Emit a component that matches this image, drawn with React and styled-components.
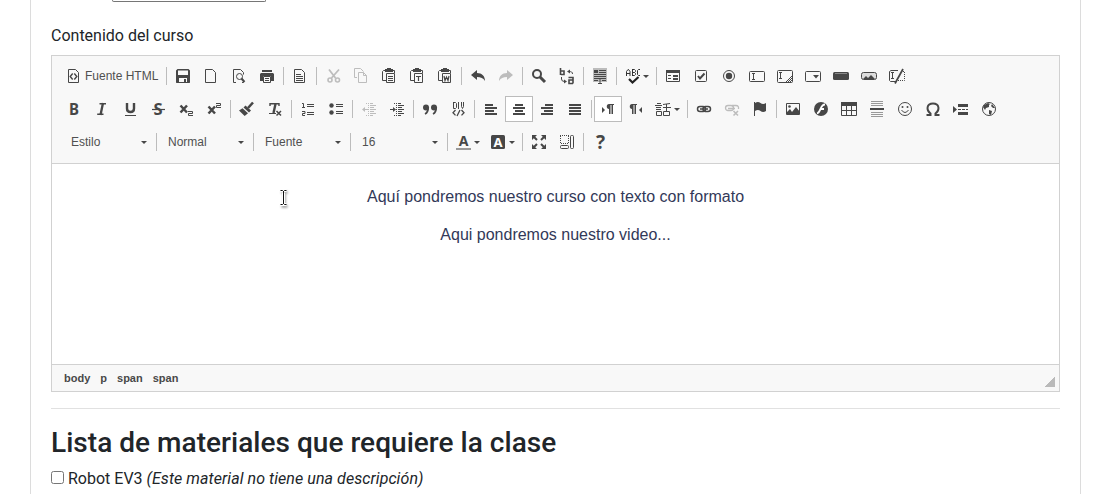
import React from 'react';
import styled, { createGlobalStyle, css } from 'styled-components';

const Global = createGlobalStyle`
  * { box-sizing: border-box; }
  body { margin: 0; background: #fff; color: #212529; font: 16px/24px Roboto, sans-serif; overflow: hidden; }
`;
const INK = '#474747';
const ui = css`font-family: "Liberation Sans", Arial, sans-serif;`;

const Page = styled.div`height: 494px; padding: 0 28px 0 30px; overflow: hidden;`;
const Card = styled.main`height: 494px; padding: 0 20px; border: solid #dcdcdc; border-width: 0 1px;`;
const FieldEnd = styled.div`
  width: 154px; height: 2px; margin-left: 61px;
  border: 1px solid #767676; border-top: 0; border-radius: 0 0 3px 3px;
`;
const Label = styled.label`display: block; margin-top: 22px; height: 31px;`;
const Editor = styled.section`${ui} border: 1px solid #d1d1d1; height: 337px; display: flex; flex-direction: column;`;
const Toolbox = styled.div`
  display: flex; flex-direction: column; gap: 5px; height: 108px; padding: 6px 8px 0;
  background: #f8f8f8; border-bottom: 1px solid #d1d1d1;
`;
const Row = styled.div`display: flex; align-items: center; height: 28px;`;
const Separator = styled.span`width: 1px; height: 18px; margin: 0 2px; background: #bcbcbc;`;
const Button = styled.button`
  ${ui} display: flex; align-items: center; flex: none; height: 26px; padding: 0;
  width: ${p => (p.$wide ? '104px' : p.$menu ? '35px' : '28px')};
  border: 1px solid ${p => (p.$on ? '#bcbcbc' : 'transparent')};
  background: ${p => (p.$on ? '#fff' : 'transparent')};
  padding-left: 5px; color: ${INK}; font-size: 12px; white-space: nowrap;
  & > svg { flex: none; color: ${p => (p.$off ? '#bdbdbd' : INK)}; }
`;
const ButtonText = styled.span`margin-left: 3px; color: #505050;`;
const Arrow = styled.i`
  flex: none; width: 0; height: 0; margin-left: ${p => p.$gap || 0}px;
  border: solid transparent; border-width: 3px 3px 0; border-top-color: ${INK};
`;
const Combo = styled.div`
  display: flex; align-items: center; justify-content: space-between;
  width: ${p => (p.$first ? 94 : 92)}px; height: 26px; color: #505050;
  padding: 0 7px 0 ${p => (p.$first ? 11 : 9)}px; font-size: 12px;
`;
const Content = styled.div`
  flex: 1; position: relative; padding-top: 20px; text-align: center; color: #323958; font-size: 16px;
  p { margin: 0 0 12px; line-height: 26px; }
`;
const Pointer = styled.svg`position: absolute; left: 227px; top: 24px; filter: drop-shadow(1px 2px 1px #0005);`;
const Status = styled.footer`
  display: flex; justify-content: space-between; height: 27px; padding: 0 4px 4px 12px;
  background: #f8f8f8; border-top: 1px solid #d1d1d1;
`;
const PathList = styled.div`display: flex; gap: 10px; font-size: 11px; font-weight: 700; line-height: 26px; color: #484848;`;
const Grip = styled.span`
  align-self: flex-end; width: 10px; height: 10px;
  background: linear-gradient(135deg, transparent 48%, #bababa 50%);
`;
const Divider = styled.hr`margin: 16px 0 0; height: 1px; border: 0; background: #e1e1e1;`;
const Title = styled.h3`margin: 17px 0 7px; font-size: 28px; font-weight: 500; line-height: 34px; letter-spacing: .035px;`;
const Material = styled.label`
  display: flex; align-items: flex-start; line-height: 24px;
  em { letter-spacing: .07px; }
`;
const Check = styled.input`width: 13px; height: 13px; margin: 4px 4px 0 0;`;

const page = 'M2.5 1.5h7l3 3v10h-10z';
const clip = (
  <>
    <path d="M4 2.500H2.500l-1 1V12.500H5M11.500 2.500H13.500V5" />
    <path className="f" d="M4 1h2V0h4v1h2v3H4z" />
    <path d="M5.500 5.500h8v9h-8z" />
  </>
);
const T = ({ x, y, s, children, ...rest }) => (
  <text className="f" x={x} y={y} fontSize={s} fontFamily="DejaVu Sans, sans-serif" fontWeight="700" {...rest}>{children}</text>
);

const icons = {
  source: <><path d={page} /><path strokeWidth="1.400" d="M6.700 5.500L4.200 8.500l2.500 3M8.300 5.500l2.500 3-2.500 3" /></>,
  save: <path className="f" fillRule="evenodd" d="M2.500 1h11L15 2.500v12l-.5.5h-13l-.5-.5v-12zM3 2.500V7h10V2.500zM4 10v4h5v-3h2v3h1v-4z" />,
  blank: <path d={page} />,
  preview: <><path d="M5 14.500H2.500v-13h7l3 3v2M12.500 13v1.500H11" /><circle cx="8.500" cy="8.500" r="3" /><path strokeWidth="2" d="M10.500 10.500l3 3.500" /></>,
  print: <><path className="f" fillRule="evenodd" d="M3 2h10v2H3zM2 5h12l1 1v7h-3V8H4v5H1V6z" /><path d="M4.500 8.500h7v6h-7zM6 10.500h4M6 12.500h4" /></>,
  templates: <><path d={page} /><path d="M4 6.500h5M4 8.500h7M4 10.500h7M4 12.500h7" /></>,
  cut: <><path strokeWidth="1.800" d="M4 1.500L10.500 10M14 1.500L6.500 10" /><circle cx="5" cy="12" r="2" strokeWidth="1.600" /><circle cx="12.500" cy="12" r="2" strokeWidth="1.600" /></>,
  copy: <><path d="M4 9.500H1.500v-9h6l3 3" /><path d="M5.500 4.500h5l3 3v7h-8zM10.500 4.500v3h3" /></>,
  paste: <>{clip}<path d="M7 8.500h5M7 10.500h5M7 12.500h5" /></>,
  pasteText: <>{clip}<path strokeWidth="1.200" d="M7 8.500h5M9.500 8v5" /></>,
  pasteWord: <>{clip}<path strokeWidth="1.200" d="M7 8l1 4.500L9.500 9l1.500 3.500L12 8" /></>,
  undo: <path className="f" d="M1 7l6-5v3c5 0 8 3 8 8-2-3-4-4-8-4v3z" />,
  redo: <path className="f" d="M15 7L9 2v3c-5 0-8 3-8 8 2-3 4-4 8-4v3z" />,
  find: <><circle cx="6" cy="6" r="4" strokeWidth="2" /><path strokeWidth="3" d="M9 9l5 5" /></>,
  replace: <><path strokeWidth="1.600" d="M1.500 0v7M2 3h3v3.500H2M9.500 9.500h4.500v6M14 12h-4v3.500h4" /><path d="M13.500 6c0-2-1-2.500-4-2.500M2.500 9v2q0 2.500 3 2.500" /><path className="f" d="M8 3.500l3-2v4zM8 13.500l-3-2v4z" /></>,
  selectAll: <><path fill="#bcbcbc" stroke="none" d="M1 0h14v14H1z" /><path d="M7 2.500h7M7 4.500h7M2 6.500h12M2 8.500h12M2 10.500h12M2 12.500h4M10 12.500h4M6.500 10.500h3M8 11v4M6 15.500h4" /><path className="f" d="M2 2h4v3H2z" /></>,
  spell: <><path d="M1.500 8V3.500l1.500-2h.5l1.500 2V8M2 5.500h3M7.500 1v7M7.500 1.500h2l1 1v1l-1 1h-2M9.500 4.500l1 1v1l-1 1h-2M15 1.500h-1.500l-1 1v4l1 1H15" stroke="#333" /><path stroke="#222" strokeWidth="2.200" d="M4 11l3.500 3.500L13.500 9" /></>,
  form: <><path d="M1.500 2.500h13v11h-13zM3 7.500h3M3 10.500h3" /><path className="f" d="M1 2h14v3H1zM8 7h5v2H8zM8 10h5v2H8z" /></>,
  checkbox: <><rect x="2.500" y="2.500" width="11" height="11" rx="1" /><path strokeWidth="2" d="M5 8l2 2.500 4.500-5" /></>,
  radio: <><circle cx="8" cy="8" r="5.500" /><circle className="f" cx="8" cy="8" r="3.200" /></>,
  textfield: <><rect x=".5" y="3.500" width="15" height="10" rx="1" /><path d="M3 5.500h3M4.500 5.500v6M3 11.500h3" /></>,
  textarea: <><rect x=".5" y="2.500" width="15" height="12" rx="1" /><path d="M2 4.500h3M3.500 4.500v6M2 10.500h3M9 14l6-6M11 14l4-4M13 14l2-2" /></>,
  select: <><rect x=".5" y="3.500" width="15" height="10" rx="1" /><path className="f" d="M8 7h6l-3 3.500z" /></>,
  button: <><rect className="f" x="0" y="4" width="16" height="8" rx="1.500" /><path stroke="#888" d="M2 5.500h12" /></>,
  imageButton: <><rect x=".5" y="4.500" width="15" height="7" rx="2" style={{ fill: '#ddd' }} /><path className="f" d="M2 11l3-3 2 2 3-3 4 4z" /></>,
  hidden: <><path d="M9 2.500H2l-1.500 1v9l1 1H7M2 4.500h3M3.500 4.500v6M2 10.500h3" /><path strokeDasharray="1 1" d="M12 3.500h3.500v9H9" /><path strokeWidth="1.700" d="M14 1L6 15.500" /></>,
  bold: <T x="3" y="14" s="16" textLength="10" lengthAdjust="spacingAndGlyphs" fontFamily="Noto Sans, sans-serif">B</T>,
  italic: <><path strokeWidth="2.300" d="M9 2L6.500 14" /><path strokeWidth="1.400" d="M5.500 2.700H12M3.200 13.300h6.300" /></>,
  underline: <><path strokeWidth="2.400" d="M5 2v5.500Q5 11 8.500 11T12 7.500V2" /><path d="M3 14.500h11" /></>,
  strike: <><T x="8" y="13.8" s="16.5" textAnchor="middle" fontFamily="Noto Sans, sans-serif">S</T><path strokeWidth="1.200" d="M2 8.500h13" /></>,
  sub: <><path strokeWidth="2.500" d="M2.500 4.500l6.500 7M9 4.500l-6.500 7" /><path d="M10 10.500h4.500v2h-4v2H15" /></>,
  sup: <><path strokeWidth="2.500" d="M2.500 5.500l6.500 7M9 5.500l-6.500 7" /><path d="M10 2.500h4.500v2h-4v2H15" /></>,
  brush: <><path strokeWidth="2.600" d="M9 7l5-5.500" /><path className="f" d="M6.500 4.500l5.500 5-2 2-5.500-5zM3.500 7.300l5.500 5L5.700 15 0 9.500z" /></>,
  clear: <><path strokeWidth="1.400" d="M3 5V2.700h9V5" /><path strokeWidth="2.400" d="M8.500 3l-2 9" /><path d="M2 12.500h7" /><path d="M9.500 10l4.500 4.500M14 10l-4.500 4.500" strokeWidth="1.500" /></>,
  numbered: <path d="M2 2.500h1.500V7M2 6.500h3M2 10.500h3v2H2.500v2H5M7 3.500h7M7 5.500h7M7 11.500h7M7 13.500h7" />,
  bullets: <><circle className="f" cx="3.500" cy="4.500" r="2.200" /><circle className="f" cx="3.500" cy="11.500" r="2.200" /><path d="M8 3.500h7M8 5.500h7M8 10.500h7M8 12.500h7" /></>,
  outdent: <><path d="M2 8.500h5M9 4.500h6M9 6.500h4M9 8.500h6M9 10.500h4M9 12.500h6M5 2.500h1M5 14.500h1M9 2.500h3M9 14.500h3" /><path strokeDasharray="1 1" d="M7.500 2v13" /><path className="f" d="M1 8.500L4 6v5z" /></>,
  indent: <><path d="M1 8.500h4M9 4.500h6M9 6.500h4M9 8.500h6M9 10.500h4M9 12.500h6M5 2.500h1M5 14.500h1M9 2.500h3M9 14.500h3" /><path strokeDasharray="1 1" d="M7.500 2v13" /><path className="f" d="M7 8.500L4 6v5z" /></>,
  quote: <><circle className="f" cx="4" cy="6.500" r="3" /><circle className="f" cx="12" cy="6.500" r="3" /><path strokeWidth="1.800" d="M6.200 6c0 4-1 6-3.200 7M14.200 6c0 4-1 6-3.200 7" /></>,
  div: <><path d="M3.500 1v6.500h2l1-1v-4l-1-1h-2M8.500 1v7M11.500 1v4.500l1 2 1-2V1" /><path strokeWidth="1.300" d="M5.500 9L3 11.700l2.500 2.700M11.500 9l2.500 2.700-2.500 2.700M10 9l-3 6" /></>,
  left: <path strokeWidth="2" d="M2 4h8M2 7h12M2 10h9M2 13h12" />,
  center: <path strokeWidth="2" d="M4 4h8M2 7h12M4 10h8M2 13h12" />,
  right: <path strokeWidth="2" d="M6 4h8M2 7h12M5 10h9M2 13h12" />,
  justify: <path strokeWidth="2" d="M2 4h12M2 7h12M2 10h12M2 13h12" />,
  ltr: <><path className="f" d="M2 6l3 3-3 3z" /><path className="f" d="M14 3H9C6 3 6 8 9 8v5h1.500V4h1v9h1.500V4H14z" /></>,
  rtl: <><path className="f" d="M14 6l-3 3 3 3z" /><path className="f" d="M9 3H4C1 3 1 8 4 8v5h1.500V4h1v9h1.500V4H9z" /></>,
  language: <path d="M1 2.500h4M-1 4.500h7M0 6.500h5M0 8.500h5M.5 10.500h5v4h-5zM7 3.500l7-1M7 6.500h8M10.500 3v7M7.500 10.500h6v4h-6z" />,
  link: <><rect x="1.500" y="5.500" width="8" height="5" rx="2.500" strokeWidth="1.500" /><rect x="7" y="5.500" width="7.500" height="5" rx="2.500" strokeWidth="1.500" /><path d="M4 8h8" strokeWidth="1.500" /></>,
  unlink: <><rect x="1.500" y="4.500" width="8" height="5" rx="2.500" strokeWidth="1.300" /><path d="M8 4.500h4q3 0 2.500 3.500M4 7.500h7" strokeWidth="1.300" /><path strokeWidth="1.600" d="M9.500 10l4.500 4.500M14 10l-4.500 4.500" /></>,
  anchor: <><path d="M2.500 1v14" /><path className="f" d="M3 2q3-2 5.500 0T14 2v8q-3 2-5.500 0T3 10z" /></>,
  image: <><path d="M1.500 2.500h13v11h-13z" /><circle className="f" cx="4.500" cy="5.500" r="1.300" /><path className="f" d="M2 13v-2l3-3 2 3 4-5 4 5v2z" /></>,
  flash: <><circle className="f" cx="8" cy="8" r="7" /><path stroke="#fff" strokeWidth="1.800" d="M12 3.500c-5 0-4 8-8 9M7 8h4" /></>,
  table: <><path d="M.5 2.500h15v12H.5zM5.500 5v9M10.500 5v9M1 9.500h14" /><path className="f" d="M0 1h16v4H0z" /></>,
  rule: <><path stroke="#999" d="M2 .5h12M2 2.500h12M2 4.500h12M2 11.500h12M2 13.500h12M2 15.500h12" /><path strokeWidth="2" d="M1 8h14" /></>,
  smiley: <><circle cx="8" cy="8" r="6.500" /><circle className="f" cx="5.500" cy="6" r="1" /><circle className="f" cx="10.500" cy="6" r="1" /><path d="M4.500 9q3.500 5 7 0" /></>,
  omega: <path strokeWidth="2" d="M1.500 14h4v-1.500C1 9 1.500 2.500 8 2.500s7 6.500 2.500 10V14h4" />,
  pagebreak: <><path className="f" d="M0 5l4 3.500-4 3.500zM5 3h10v3H5zM5 11h10v3H5z" /><path strokeDasharray="3 1" d="M5 8.500h10" /></>,
  globe: <><circle cx="8" cy="8" r="6.500" /><path className="f" d="M3 4l4-2 2 1-1 1 0 2-3 1-1 2-2-3zM8 9l3 1-1 4-2-1zM11 3l3 4-2 0-2-2z" /></>,
  color: <><T x="7.500" y="12" s="14" textAnchor="middle" fontFamily="Noto Sans, sans-serif">A</T><path stroke="#999" strokeWidth="2" d="M0 15h15" /></>,
  background: <><rect className="f" x="0" y="1" width="14" height="14" rx="1.500" /><T x="7" y="13" s="13" textAnchor="middle" fontFamily="Noto Sans, sans-serif" style={{ fill: '#fff' }}>A</T></>,
  maximize: <><path strokeWidth="2" d="M2 2l4 4M14 2l-4 4M2 14l4-4M14 14l-4-4" /><path className="f" d="M1 1h5L1 6zM10 1h5v5zM1 10v5h5zM15 10v5h-5z" /></>,
  blocks: <><path strokeDasharray="1 1" d="M1 1.500h9M1.500 2v8M9.500 2v8M2 9.500h7" /><rect x="11.500" y="1.500" width="3" height="13" rx="1" /><rect x="1.500" y="11.500" width="8" height="3" rx="1" /></>,
  about: <T x="8.500" y="15" s="19" textAnchor="middle" fontFamily="Noto Sans, sans-serif">?</T>,
};

const Glyph = styled.svg`
  fill: none; stroke: currentColor; overflow: visible;
  .f { fill: currentColor; stroke: none; }
`;
const Icon = ({ name }) => <Glyph width="16" height="16" viewBox="0 0 16 16">{icons[name]}</Glyph>;

const disabled = ['cut', 'copy', 'redo', 'outdent', 'unlink'];
const active = ['center', 'ltr'];
const menus = ['spell', 'language', 'color', 'background'];

const rows = [
  'source|save blank preview print|templates|cut copy paste pasteText pasteWord|undo redo|find replace|selectAll|spell|form checkbox radio textfield textarea select button imageButton hidden',
  'bold italic underline strike sub sup|brush clear|numbered bullets|outdent indent|quote div|left center right justify|ltr rtl language|link unlink anchor|image flash table rule smiley omega pagebreak globe',
  'combo:Estilo|combo:Normal|combo:Fuente|combo:16|color background|maximize blocks|about',
].map(row => row.split('|').map(group => group.split(' ')));

function Tool({ name }) {
  if (name.startsWith('combo:')) {
    const text = name.slice(6);
    return <Combo $first={text === 'Estilo'}><span>{text}</span><Arrow /></Combo>;
  }
  const menu = menus.includes(name);
  return (
    <Button type="button" $wide={name === 'source'} $menu={menu} $on={active.includes(name)} $off={disabled.includes(name)}>
      <Icon name={name} />
      {name === 'source' && <ButtonText>Fuente HTML</ButtonText>}
      {menu && <Arrow $gap={2} />}
    </Button>
  );
}

export default function App() {
  return (
    <Page>
      <Global />
      <Card>
        <FieldEnd />
        <Label>Contenido del curso</Label>
        <Editor>
          <Toolbox>
            {rows.map((groups, r) => (
              <Row key={r}>
                {groups.map((group, g) => (
                  <React.Fragment key={g}>
                    {g > 0 && <Separator />}
                    {group.map(name => <Tool key={name} name={name} />)}
                  </React.Fragment>
                ))}
              </Row>
            ))}
          </Toolbox>
          <Content>
            <Pointer width="10" height="19" viewBox="0 0 10 19" fill="none">
              <path stroke="#fff" strokeWidth="3" d="M1.500 2.500h2l1 1 1-1h2M4.500 3v13M1.500 16.500h2l1-1 1 1h2" />
              <path stroke="#111" d="M1.500 2.500h2l1 1 1-1h2M4.500 3v13M1.500 16.500h2l1-1 1 1h2" />
            </Pointer>
            <p>Aquí pondremos nuestro curso con texto con formato</p>
            <p>Aqui pondremos nuestro video...</p>
          </Content>
          <Status>
            <PathList><span>body</span><span>p</span><span>span</span><span>span</span></PathList>
            <Grip />
          </Status>
        </Editor>
        <Divider />
        <Title>Lista de materiales que requiere la clase</Title>
        <Material><Check type="checkbox" /><span>Robot EV3 <em>(Este material no tiene una descripción)</em></span></Material>
      </Card>
    </Page>
  );
}
